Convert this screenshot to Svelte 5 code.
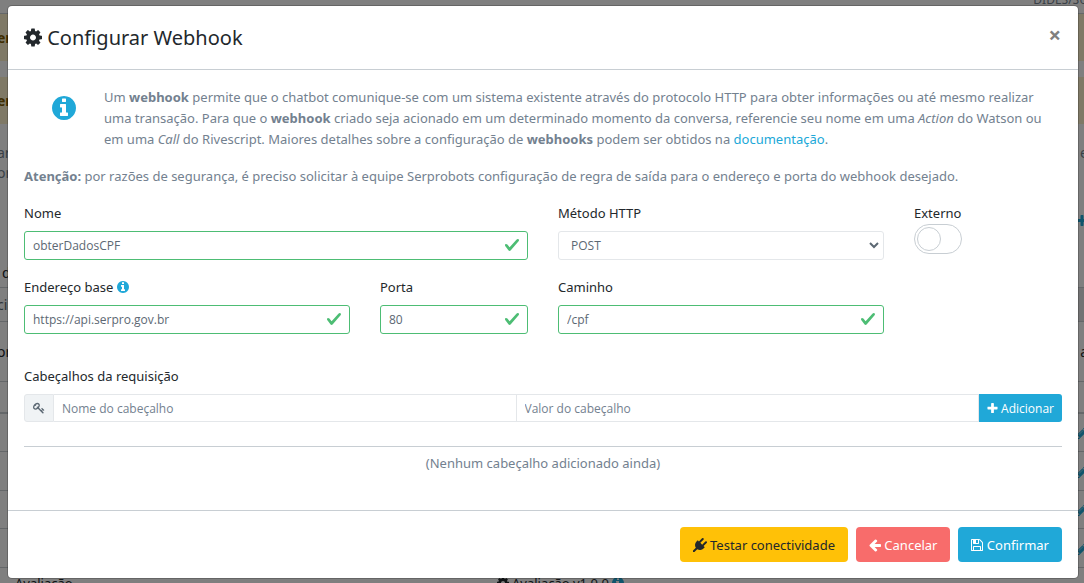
<script>
  const icons = {
    cog: 'M1152 896q0-106-75-181t-181-75-181 75-75 181 75 181 181 75 181-75 75-181zm512-109v222q0 12-8 23t-20 13l-185 28q-19 54-39 91 35 50 107 138 10 12 10 25t-9 23q-27 37-99 108t-94 71q-12 0-26-9l-138-108q-44 23-91 38-16 136-29 186-7 28-36 28h-222q-14 0-24.5-8.5t-11.5-21.5l-28-184q-49-16-90-37l-141 107q-10 9-25 9-14 0-25-11-126-114-165-168-7-10-7-23 0-12 8-23 15-21 51-66.5t54-70.5q-27-50-41-99l-183-27q-13-2-21-12.5t-8-23.5v-222q0-12 8-23t19-13l186-28q14-46 39-92-40-57-107-138-10-12-10-24 0-10 9-23 26-36 98.5-107.5t94.5-71.5q13 0 26 10l138 107q44-23 91-38 16-136 29-186 7-28 36-28h222q14 0 24.5 8.5t11.5 21.5l28 184q49 16 90 37l142-107q9-9 24-9 13 0 25 10 129 119 165 170 7 8 7 22 0 12-8 23-15 21-51 66.5t-54 70.5q26 50 41 98l183 28q13 2 21 12.5t8 23.5z',
    info: 'M1152 1376v-160q0-14-9-23t-23-9h-96v-512q0-14-9-23t-23-9h-320q-14 0-23 9t-9 23v160q0 14 9 23t23 9h96v320h-96q-14 0-23 9t-9 23v160q0 14 9 23t23 9h448q14 0 23-9t9-23zm-128-896v-160q0-14-9-23t-23-9h-192q-14 0-23 9t-9 23v160q0 14 9 23t23 9h192q14 0 23-9t9-23zm640 416q0 209-103 385.5t-279.5 279.5-385.5 103-385.5-103-279.5-279.5-103-385.5 103-385.5 279.5-279.5 385.5-103 385.5 103 279.5 279.5 103 385.5z',
    arrowLeft: 'M1664 896v128q0 53-32.5 90.5t-84.5 37.5h-704l293 294q38 36 38 90t-38 90l-75 76q-37 37-90 37-52 0-91-37l-651-652q-37-37-37-90 0-52 37-91l651-650q38-38 91-38 52 0 90 38l75 74q38 38 38 91t-38 91l-293 293h704q52 0 84.5 37.5t32.5 90.5z',
    plus: 'M1600 736v192q0 40-28 68t-68 28h-416v416q0 40-28 68t-68 28h-192q-40 0-68-28t-28-68v-416h-416q-40 0-68-28t-28-68v-192q0-40 28-68t68-28h416v-416q0-40 28-68t68-28h192q40 0 68 28t28 68v416h416q40 0 68 28t28 68z',
    save: 'M512 1536h768v-384h-768v384zm896 0h128v-896q0-14-10-38.5t-20-34.5l-281-281q-10-10-34-20t-39-10v416q0 40-28 68t-68 28h-576q-40 0-68-28t-28-68v-416h-128v1280h128v-416q0-40 28-68t68-28h832q40 0 68 28t28 68v416zm-384-928v-320q0-13-9.5-22.5t-22.5-9.5h-192q-13 0-22.5 9.5t-9.5 22.5v320q0 13 9.5 22.5t22.5 9.5h192q13 0 22.5-9.5t9.5-22.5zm640 32v928q0 40-28 68t-68 28h-1344q-40 0-68-28t-28-68v-1344q0-40 28-68t68-28h928q40 0 88 20t76 48l280 280q28 28 48 76t20 88z',
    pencil: 'M491 1536l91-91-235-235-91 91v107h128v128h107zm523-928q0-22-22-22-10 0-17 7l-542 542q-7 7-7 17 0 22 22 22 10 0 17-7l542-542q7-7 7-17zm-54-192l416 416-832 832h-416v-416zm683 96q0 53-37 90l-166 166-416-416 166-165q36-38 90-38 53 0 91 38l235 234q37 39 37 91z',
  };

  const wideIcons = {
    plug: 'M1755 453q37 38 37 90.5t-37 90.5l-401 400 150 150-160 160q-163 163-389.5 186.5t-411.5-100.5l-362 362h-181v-181l362-362q-124-185-100.5-411.5t186.5-389.5l160-160 150 150 400-401q38-37 91-37t90 37 37 90.5-37 90.5l-400 401 234 234 401-400q38-37 91-37t90 37z',
    key: 'M832 512q0-80-56-136t-136-56-136 56-56 136q0 42 19 83-41-19-83-19-80 0-136 56t-56 136 56 136 136 56 136-56 56-136q0-42-19-83 41 19 83 19 80 0 136-56t56-136zm851 704q0 17-49 66t-66 49q-9 0-28.5-16t-36.5-33-38.5-40-24.5-26l-96 96 220 220q28 28 28 68 0 42-39 81t-81 39q-40 0-68-28l-671-671q-176 131-365 131-163 0-265.5-102.5t-102.5-265.5q0-160 95-313t248-248 313-95q163 0 265.5 102.5t102.5 265.5q0 189-131 365l355 355 96-96q-3-3-26-24.5t-40-38.5-33-36.5-16-28.5q0-17 49-66t66-49q13 0 23 10 6 6 46 44.5t82 79.5 86.5 86 73 78 28.5 41z',
  };

  // page rows behind the dialog
  const pageRows = [
    { kind: 'top', height: 14, right: 'DIDES/SU' },
    { kind: 'alert', height: 47, left: 'er' },
    { kind: '', height: 16 },
    { kind: 'alert', height: 47, left: 'er' },
    { kind: '', height: 18 },
    { kind: 'muted', height: 20, left: 'ar', right: 'e' },
    { kind: 'muted', height: 20, left: 'or' },
    { kind: '', height: 76, icon: 'plus' },
    { kind: 'line indent', height: 30, left: 'd' },
    { kind: 'line shade', height: 34, left: 'cip' },
    { kind: 'line', height: 60, left: 'or', right: 'a' },
    { kind: 'line strong', height: 32 },
    { kind: 'line', height: 38, icon: 'pencil' },
    { kind: 'line', height: 39, icon: 'pencil' },
    { kind: 'line', height: 38, icon: 'pencil' },
    { kind: 'line', height: 39, icon: 'pencil' },
  ];

  let webhook = {
    name: 'obterDadosCPF',
    method: 'POST',
    external: false,
    baseUrl: 'https://api.serpro.gov.br',
    port: '80',
    path: '/cpf',
  };

  let newHeader = { name: '', value: '' };
  let headers = [];

  function addHeader() {
    if (!newHeader.name.trim()) return;
    headers = [...headers, newHeader];
    newHeader = { name: '', value: '' };
  }
</script>

{#snippet icon(name)}
  {#if wideIcons[name]}
    <svg class="icon wide" viewBox="0 0 1792 1792" aria-hidden="true"><path d={wideIcons[name]} /></svg>
  {:else}
    <svg class="icon" viewBox="128 0 1536 1792" aria-hidden="true"><path d={icons[name]} /></svg>
  {/if}
{/snippet}

{#snippet check()}
  <svg class="check" viewBox="0 0 8 8" aria-hidden="true">
    <path d="M2.3 6.73L.6 4.53c-.4-1.04.46-1.4 1.1-.8l1.1 1.4 3.4-3.8c.6-.63 1.6-.27 1.2.7l-4 4.6c-.43.5-.8.4-1.1.1z" />
  </svg>
{/snippet}

<div class="app">
  <div class="page" aria-hidden="true">
    {#each pageRows as row}
      <div class="page-row {row.kind}" style="height: {row.height}px">
        <span>{row.left || ''}</span>
        <span class="page-end">
          {row.right || ''}
          {#if row.icon}{@render icon(row.icon)}{/if}
        </span>
      </div>
    {/each}
    <div class="page-foot">
      <span>Avaliação</span>
      <span class="page-version">{@render icon('cog')} Avaliação v1.0.0 <i>{@render icon('info')}</i></span>
    </div>
  </div>

  <div class="backdrop">
    <div class="modal" role="dialog" aria-labelledby="modal-title">
      <header class="modal-header">
        <h4 id="modal-title">{@render icon('cog')} Configurar Webhook</h4>
        <button class="close" type="button" aria-label="Fechar">×</button>
      </header>

      <div class="modal-body">
        <div class="intro">
          <div class="intro-icon">{@render icon('info')}</div>
          <p>
            Um <strong>webhook</strong> permite que o chatbot comunique-se com um sistema existente através do protocolo HTTP para obter informações ou até mesmo realizar
            uma transação. Para que o <strong>webhook</strong> criado seja acionado em um determinado momento da conversa, referencie seu nome em uma <em>Action</em> do Watson ou
            em uma <em>Call</em> do Rivescript. Maiores detalhes sobre a configuração de <strong>webhooks</strong> podem ser obtidos na <a href="#documentacao">documentação</a>.
          </p>
        </div>

        <p class="warning">
          <strong>Atenção:</strong> por razões de segurança, é preciso solicitar à equipe Serprobots configuração de regra de saída para o endereço e porta do webhook desejado.
        </p>

        <div class="form">
          <div class="field span-6">
            <label for="name">Nome</label>
            <div class="control">
              <input id="name" class="valid" type="text" bind:value={webhook.name} />
              {@render check()}
            </div>
          </div>
          <div class="field span-4">
            <label for="method">Método HTTP</label>
            <div class="control">
              <select id="method" bind:value={webhook.method}>
                <option>GET</option>
                <option>POST</option>
                <option>PUT</option>
                <option>DELETE</option>
              </select>
              <svg class="chevron" viewBox="0 0 10 8" aria-hidden="true"><path d="M1 2l4 4 4-4" /></svg>
            </div>
          </div>
          <div class="field span-2">
            <label class="switch-label" for="external">Externo</label>
            <input id="external" class="switch" type="checkbox" bind:checked={webhook.external} />
          </div>

          <div class="field span-4">
            <label for="base-url">Endereço base <span class="hint">{@render icon('info')}</span></label>
            <div class="control">
              <input id="base-url" class="valid" type="text" bind:value={webhook.baseUrl} />
              {@render check()}
            </div>
          </div>
          <div class="field span-2">
            <label for="port">Porta</label>
            <div class="control">
              <input id="port" class="valid" type="text" bind:value={webhook.port} />
              {@render check()}
            </div>
          </div>
          <div class="field span-4">
            <label for="path">Caminho</label>
            <div class="control">
              <input id="path" class="valid" type="text" bind:value={webhook.path} />
              {@render check()}
            </div>
          </div>
        </div>

        <div class="headers">
          <label for="header-name">Cabeçalhos da requisição</label>
          <div class="input-group">
            <span class="addon">{@render icon('key')}</span>
            <input id="header-name" type="text" placeholder="Nome do cabeçalho" bind:value={newHeader.name} />
            <input type="text" placeholder="Valor do cabeçalho" aria-label="Valor do cabeçalho" bind:value={newHeader.value} />
            <button class="add" type="button" on:click={addHeader}>{@render icon('plus')} Adicionar</button>
          </div>
        </div>

        <div class="header-list">
          {#each headers as header}
            <div>{header.name}: {header.value}</div>
          {:else}
            (Nenhum cabeçalho adicionado ainda)
          {/each}
        </div>
      </div>

      <footer class="modal-footer">
        <button class="btn test" type="button">{@render icon('plug')} Testar conectividade</button>
        <button class="btn cancel" type="button">{@render icon('arrowLeft')} Cancelar</button>
        <button class="btn confirm" type="button">{@render icon('save')} Confirmar</button>
      </footer>
    </div>
  </div>
</div>

<style>
  :global(body) {
    margin: 0;
    overflow: hidden;
  }

  .app {
    position: relative;
    height: 100vh;
    overflow: hidden;
    font-family: "Noto Sans", "Open Sans", sans-serif;
    font-size: 13px;
    line-height: 21px;
    color: #23282c;
  }

  .app * {
    box-sizing: border-box;
  }

  button,
  input,
  select {
    margin: 0;
    font-family: inherit;
  }

  button {
    cursor: pointer;
  }

  .icon {
    width: 12px;
    height: 14px;
    fill: currentColor;
    vertical-align: -2px;
  }

  .icon.wide {
    width: 14px;
  }

  /* page behind */
  .page {
    margin: 0 -4px 0 -3px;
    background: #fff;
  }

  .page-row {
    display: flex;
    align-items: center;
    justify-content: space-between;
    font-size: 14px;
    white-space: nowrap;
  }

  .page-row.top {
    align-items: flex-end;
    line-height: 26px;
    font-size: 12px;
    border-bottom: 1px solid #c8ced3;
    color: #73818f;
  }

  .page-row.alert {
    background: #fff3cd;
    color: #805b00;
    font-weight: 700;
  }

  .page-row.muted {
    color: #73818f;
  }

  .page-row.line {
    border-bottom: 1px solid #c8ced3;
  }

  .page-row.strong {
    border-bottom-width: 2px;
  }

  .page-row.indent {
    padding-left: 5px;
  }

  .page-row.shade {
    background: linear-gradient(to left, #e4e5e6 50%, #fff 50%);
    color: #5c6873;
  }

  .page-end .icon {
    color: #20a8d8;
  }

  .page-foot {
    display: flex;
    gap: 424px;
    padding: 5px 18px;
    white-space: nowrap;
  }

  .page-version i {
    color: #20a8d8;
  }

  .backdrop {
    position: absolute;
    inset: 0;
    padding: 6px 6px 0 8px;
    background: rgba(0, 0, 0, 0.5);
  }

  .modal {
    background: #fff;
    border-radius: 4px;
    box-shadow: 0 0 0 1px rgba(0, 0, 0, 0.2);
  }

  .modal-header {
    display: flex;
    justify-content: space-between;
    align-items: flex-start;
    padding: 16px;
    border-bottom: 1px solid #c8ced3;
  }

  h4 {
    margin: 0;
    font-size: 20px;
    font-weight: 400;
    line-height: 31px;
  }

  h4 .icon {
    width: 18px;
    height: 21px;
    vertical-align: -3px;
  }

  .close {
    padding: 0 1px;
    border: 0;
    background: none;
    color: #7f7f7f;
    font-size: 22px;
    font-weight: 700;
    line-height: 24px;
  }

  .modal-body {
    padding: 17px 16px 16px;
  }

  .intro {
    display: flex;
    color: #73818f;
  }

  .intro-icon {
    flex: 0 0 80px;
    padding-top: 7px;
    color: #20a8d8;
    text-align: center;
  }

  .intro-icon .icon {
    width: 24px;
    height: 28px;
  }

  p {
    margin: 0 0 16px;
  }

  .warning {
    color: #73818f;
  }

  a {
    color: #20a8d8;
    text-decoration: none;
  }

  .form {
    display: grid;
    grid-template-columns: repeat(12, 1fr);
    column-gap: 30px;
    row-gap: 17px;
  }

  .span-6 {
    grid-column: span 6;
  }

  .span-4 {
    grid-column: span 4;
  }

  .span-2 {
    grid-column: span 2;
  }

  label {
    display: block;
    margin-bottom: 7px;
  }

  .hint {
    color: #20a8d8;
  }

  .control {
    position: relative;
  }

  .control input,
  .control select {
    display: block;
    width: 100%;
    height: 29px;
    padding: 4px 8px;
    border: 1px solid #e4e7ea;
    border-radius: 3px;
    background: #fff;
    color: #5c6873;
    font-family: "Open Sans", sans-serif;
    font-size: 12px;
  }

  .control select {
    appearance: none;
    padding-left: 12px;
  }

  .control input.valid {
    padding-right: 32px;
    border-color: #4dbd74;
  }

  .check {
    position: absolute;
    top: 6px;
    right: 8px;
    width: 16px;
    height: 16px;
    fill: #4dbd74;
  }

  .chevron {
    position: absolute;
    top: 10px;
    right: 5px;
    width: 10px;
    height: 8px;
    fill: none;
    stroke: #5c6873;
    stroke-width: 2;
  }

  .switch-label {
    margin-bottom: 0;
  }

  .switch {
    display: flex;
    align-items: center;
    appearance: none;
    width: 48px;
    height: 30px;
    padding: 0 2px;
    border: 1px solid #c8ced3;
    border-radius: 15px;
    background: #fff;
  }

  .switch::before {
    content: '';
    width: 24px;
    height: 24px;
    border: 1px solid #c8ced3;
    border-radius: 50%;
    box-sizing: border-box;
  }

  .switch:checked {
    justify-content: flex-end;
    background: #20a8d8;
  }

  .headers {
    margin-top: 32px;
  }

  .input-group {
    display: flex;
    height: 28px;
  }

  .input-group input {
    flex: 1 1 0;
    min-width: 0;
    padding: 4px 8px;
    border: 1px solid #e4e7ea;
    border-left-width: 0;
    color: #5c6873;
    font-family: "Open Sans", sans-serif;
    font-size: 12px;
  }

  .input-group input::placeholder {
    color: #73818f;
  }

  .addon {
    display: flex;
    align-items: center;
    padding: 0 8px;
    border: 1px solid #e4e7ea;
    border-radius: 3px 0 0 3px;
    background: #f0f3f5;
    color: #5c6873;
  }

  .addon .icon {
    width: 12px;
    height: 12px;
  }

  .add {
    padding: 0 8px;
    border: 0;
    border-radius: 0 3px 3px 0;
    background: #20a8d8;
    color: #fff;
    font-family: "Open Sans", sans-serif;
    font-size: 12px;
  }

  .add .icon {
    width: 11px;
    height: 13px;
  }

  .header-list {
    margin-top: 24px;
    padding: 6px 0 20px;
    border-top: 1px solid #c8ced3;
    color: #73818f;
    text-align: center;
  }

  .modal-footer {
    display: flex;
    justify-content: flex-end;
    gap: 8px;
    padding: 16px;
    border-top: 1px solid #c8ced3;
  }

  .btn {
    height: 35px;
    padding: 0 13px;
    border: 0;
    border-radius: 4px;
    color: #fff;
    font-size: 13px;
  }

  .test {
    background: #ffc107;
    color: #23282c;
  }

  .cancel {
    background: #f86c6b;
  }

  .confirm {
    background: #20a8d8;
  }
</style>
